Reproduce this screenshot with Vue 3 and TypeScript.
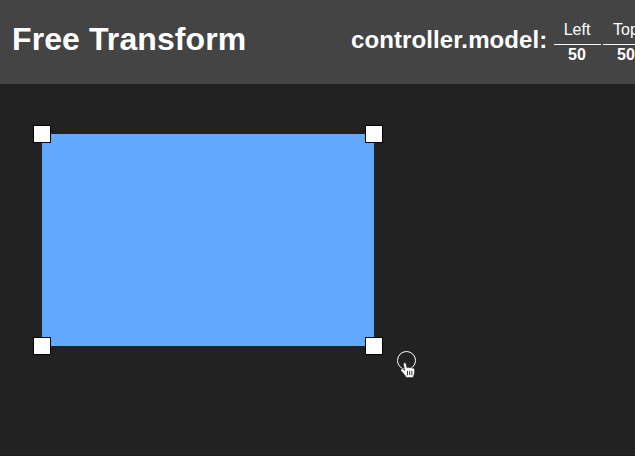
<script setup lang="ts">
import { reactive } from 'vue'

const model = reactive({ left: 50, top: 50, width: 332, height: 212 })

const columns = [
  { label: 'Left', key: 'left' },
  { label: 'Top', key: 'top' },
] as const

const corners = ['nw', 'ne', 'sw', 'se']
</script>

<template>
  <div class="app">
    <header class="bar">
      <h1 class="title">Free Transform</h1>
      <h2 class="subtitle">controller.model:</h2>
      <div class="model">
        <div v-for="col in columns" :key="col.key" class="column">
          <span class="label">{{ col.label }}</span>
          <strong class="value">{{ model[col.key] }}</strong>
        </div>
      </div>
    </header>
    <main class="stage">
      <div class="box" :style="{ width: model.width + 'px', height: model.height + 'px' }">
        <i v-for="c in corners" :key="c" class="handle" :class="c"></i>
        <i class="rotator"></i>
      </div>
      <svg class="pointer" width="16" height="17" viewBox="0 0 16 17">
        <path
          d="M4 1C4.8.5 5.8.9 6 1.8L7 5.7C7.7 4.9 9 5 9.4 5.9C10.3 5.1 11.7 5.4 12 6.3C13.3 5.7 14.6 6.4 14.6 7.8V10.8C14.6 12.8 13.3 13.6 13.2 15.6H6.2C5.7 13.2 2.6 10.9.9 8.4C.5 7.2 1.9 6.3 3 7L4.7 8.5L3.5 2.4C3.4 1.8 3.5 1.3 4 1Z"
          fill="#fff"
          stroke="#222"
          stroke-width=".6"
        />
        <path d="M7.5 8.8V13.2M9.7 8.8V13.2M11.9 8.8V13.2" stroke="#222" stroke-width=".9" />
      </svg>
    </main>
  </div>
</template>

<style>
body {
  margin: 0;
  overflow: hidden;
  background: #222;
}
</style>

<style scoped>
.app {
  display: flex;
  flex-direction: column;
  height: 456px;
  overflow: hidden;
  box-sizing: border-box;
  border-bottom: 1px solid #1b181a;
  background: #222;
  color: #fff;
  font-family: "Liberation Sans", Arial, sans-serif;
}
.bar {
  display: flex;
  flex: none;
  align-items: flex-start;
  height: 84px;
  background: #444;
  white-space: nowrap;
}
.title {
  flex: none;
  box-sizing: border-box;
  width: 351px;
  margin: 0;
  padding: 21px 0 0 12px;
  font-size: 32px;
  line-height: 36px;
  letter-spacing: 0.1px;
}
.subtitle {
  flex: none;
  width: 203px;
  margin: 0;
  padding-top: 26px;
  font-size: 24px;
  line-height: 28px;
  letter-spacing: 0.1px;
}
.model {
  display: flex;
  flex: none;
  gap: 2px;
  padding-top: 20px;
  font-size: 16px;
  line-height: 18px;
  text-align: center;
}
.column {
  display: flex;
  flex-direction: column;
  min-width: 47px;
}
.label {
  height: 25px;
  padding: 0 10px 0 9px;
  box-sizing: border-box;
  border-bottom: 1px solid #fff;
  line-height: 19px;
}
.value {
  padding: 1px 1px 0 0;
}
.stage {
  position: relative;
  flex: 1;
  padding: 50px 42px;
}
.box {
  position: relative;
  background: #62a8ff;
}
.handle {
  position: absolute;
  box-sizing: border-box;
  width: 18px;
  height: 18px;
  border: 1px solid #000;
  background: #fff;
}
.nw, .ne { top: -9px; }
.sw, .se { bottom: -9px; }
.nw, .sw { left: -9px; }
.ne, .se { right: -9px; }
.rotator {
  position: absolute;
  right: -42px;
  bottom: -24px;
  box-sizing: border-box;
  width: 19px;
  height: 19px;
  border: 1px solid #fff;
  border-radius: 50%;
}
.pointer {
  position: absolute;
  left: 400px;
  top: 278px;
}
</style>
